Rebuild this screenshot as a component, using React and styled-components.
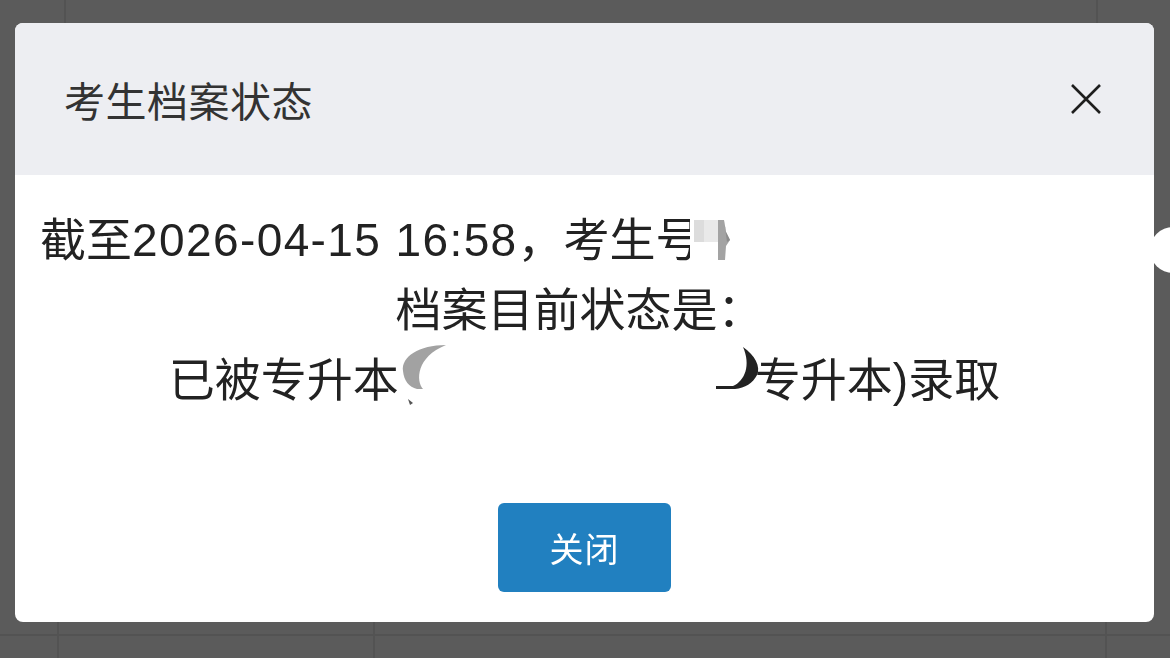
import React from "react";
import styled, { createGlobalStyle } from "styled-components";

const Global = createGlobalStyle`
  html, body { margin: 0; padding: 0; }
  body {
    width: 1170px;
    height: 658px;
    overflow: hidden;
    background: #5b5b5b;
    font-family: "Liberation Sans", "Noto Sans CJK SC", sans-serif;
  }
`;

const Page = styled.div`
  display: flex;
  flex-direction: column;
  width: 1170px;
  height: 658px;
  background: #5b5b5b;
`;

const Band = styled.div`
  display: grid;
  grid-template-columns: ${(p) => p.$cols};
  grid-template-rows: ${(p) => p.$rows || "1fr"};
  height: ${(p) => p.$h}px;
`;

const Cell = styled.div`
  border-right: ${(p) => (p.$right ? "2px solid #535353" : "none")};
  border-bottom: ${(p) => (p.$bottom ? "2px solid #535353" : "none")};
`;

const Overlay = styled.div`
  position: fixed;
  inset: 0;
  display: flex;
  align-items: flex-start;
  padding: 23px 0 0 15px;
`;

const Dialog = styled.div`
  position: relative;
  width: 1139px;
  background: #fff;
  border-radius: 8px;
  display: flex;
  flex-direction: column;
`;

const Header = styled.div`
  height: 152px;
  background: #edeef2;
  border-radius: 8px 8px 0 0;
  display: flex;
  align-items: center;
  justify-content: space-between;
  padding: 0 53px 0 49px;
`;

const Title = styled.h3`
  margin: 0;
  font-family: "Noto Sans CJK SC", sans-serif;
  font-weight: 400;
  font-size: 41px;
  color: #333;
  letter-spacing: 0.5px;
`;

const CloseButton = styled.button`
  width: 30px;
  height: 30px;
  padding: 0;
  border: none;
  background: transparent;
  display: flex;
  cursor: pointer;
`;

const Body = styled.div`
  padding: 30px 25px 0;
  display: flex;
  flex-direction: column;
  color: #222;
  font-size: 46px;
`;

const Line = styled.div`
  height: 70px;
  line-height: 70px;
  white-space: nowrap;
  padding-right: ${(p) => p.$shift || 0}px;
  display: flex;
  align-items: center;
  justify-content: ${(p) => (p.$align === "left" ? "flex-start" : "center")};
`;

const Digits = styled.span`
  letter-spacing: 1.4px;
`;

const Redact = styled.svg`
  display: block;
  flex: none;
  overflow: visible;
  margin-left: ${(p) => p.$ml || 0}px;
  position: relative;
  z-index: 1;
`;

const EdgeBlob = styled.div`
  position: absolute;
  left: 1135px;
  top: 204px;
  width: 46px;
  height: 46px;
  border-radius: 50%;
  background: #fff;
`;

const Footer = styled.div`
  display: flex;
  justify-content: center;
  padding: 88px 0 30px;
`;

const PrimaryButton = styled.button`
  width: 173px;
  height: 89px;
  border: none;
  border-radius: 6px;
  background: #2180c0;
  color: #fff;
  font-family: "Noto Sans CJK SC", sans-serif;
  font-size: 34px;
  font-weight: 400;
  letter-spacing: 1px;
  cursor: pointer;
`;

export default function App() {
  return (
    <>
      <Global />
      <Page>
        <Band $h={320} $cols="66px 1032px 1fr">
          <Cell $right />
          <Cell $right />
          <Cell />
        </Band>
        <Band $h={338} $cols="59px 316px 732px 1fr" $rows="316px 1fr">
          <Cell $right $bottom />
          <Cell $right $bottom />
          <Cell $right $bottom />
          <Cell $bottom />
          <Cell $right />
          <Cell $right />
          <Cell $right />
          <Cell />
        </Band>
      </Page>
      <Overlay>
        <Dialog>
          <Header>
            <Title>考生档案状态</Title>
            <CloseButton aria-label="关闭">
              <svg width="30" height="30" viewBox="0 0 30 30">
                <path d="M1 1 L29 29 M29 1 L1 29" stroke="#1e1e1e" strokeWidth="2.6" fill="none" />
              </svg>
            </CloseButton>
          </Header>
          <Body>
            <Line $align="left">
              截至<Digits>2026-04-15 16:58</Digits>，考生号
              <Redact $ml={-12} width="48" height="44" viewBox="0 0 48 44">
                <rect x="0" y="0" width="48" height="44" fill="#fff" />
                <rect x="4" y="2" width="24" height="22" fill="#e9e9e9" />
                <rect x="4" y="2" width="10" height="22" fill="#dcdcdc" />
                <path d="M28 2 L34 2 L36 14 L40 22 L36 28 L35 42 L28 42 Z" fill="#a3a3a3" />
                <path d="M34 2 L36 14 L40 22 L37 24 Z" fill="#8c8c8c" />
              </Redact>
            </Line>
            <Line $shift={10}>档案目前状态是：</Line>
            <Line>
              已被专升本
              <Redact width="356" height="70" viewBox="0 0 356 70">
                <rect x="0" y="0" width="356" height="70" fill="#fff" />
                <path d="M47 0 C20 0 2 12 4 26 C5 36 10 42 18 44 L24 44 C17 36 17 12 47 0 Z" fill="#a2a2a2" />
                <path d="M9 54 L14 58 L11 60 Z" fill="#555" />
                <path d="M344 2 C356 10 362 22 358 30 C354 38 346 43 336 44 L317 44 L317 41 L334 41 C346 36 352 20 344 2 Z" fill="#222" />
              </Redact>
              专升本)录取
            </Line>
          </Body>
          <Footer>
            <PrimaryButton>关闭</PrimaryButton>
          </Footer>
          <EdgeBlob />
        </Dialog>
      </Overlay>
    </>
  );
}
